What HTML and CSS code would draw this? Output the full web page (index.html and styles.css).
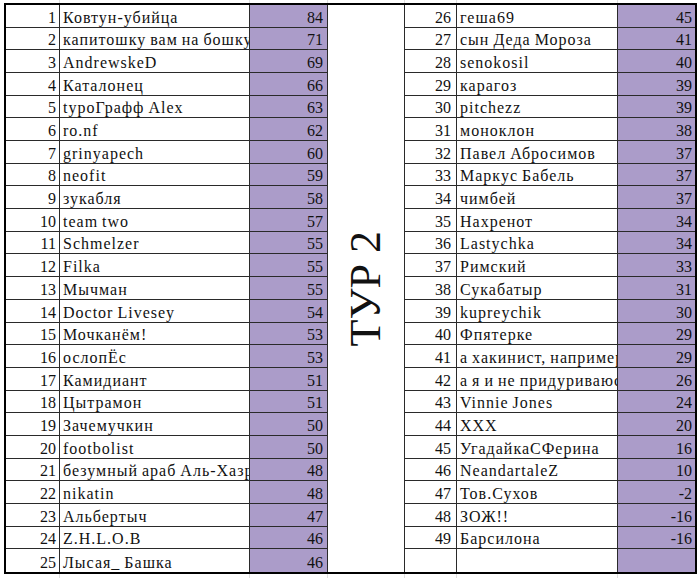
FILE: index.html
```html
<!DOCTYPE html>
<html lang="ru">
<head>
<meta charset="utf-8">
<title>ТУР 2</title>
<link rel="stylesheet" href="styles.css">
</head>
<body>
<div class="sheet">
  <div class="tour"><span class="tour-text">ТУР 2</span></div>

  <div class="c n">1</div><div class="c name">Ковтун-убийца</div><div class="c s">84</div>
  <div class="c n nr">26</div><div class="c name">геша69</div><div class="c s sr">45</div>

  <div class="c n">2</div><div class="c name">капитошку вам на бошку</div><div class="c s">71</div>
  <div class="c n nr">27</div><div class="c name">сын Деда Мороза</div><div class="c s sr">41</div>

  <div class="c n">3</div><div class="c name">AndrewskeD</div><div class="c s">69</div>
  <div class="c n nr">28</div><div class="c name">senokosil</div><div class="c s sr">40</div>

  <div class="c n">4</div><div class="c name">Каталонец</div><div class="c s">66</div>
  <div class="c n nr">29</div><div class="c name">карагоз</div><div class="c s sr">39</div>

  <div class="c n">5</div><div class="c name">typoГрафф Alex</div><div class="c s">63</div>
  <div class="c n nr">30</div><div class="c name">pitchezz</div><div class="c s sr">39</div>

  <div class="c n">6</div><div class="c name">ro.nf</div><div class="c s">62</div>
  <div class="c n nr">31</div><div class="c name">моноклон</div><div class="c s sr">38</div>

  <div class="c n">7</div><div class="c name">grinyapech</div><div class="c s">60</div>
  <div class="c n nr">32</div><div class="c name">Павел Абросимов</div><div class="c s sr">37</div>

  <div class="c n">8</div><div class="c name">neofit</div><div class="c s">59</div>
  <div class="c n nr">33</div><div class="c name">Маркус Бабель</div><div class="c s sr">37</div>

  <div class="c n">9</div><div class="c name">зукабля</div><div class="c s">58</div>
  <div class="c n nr">34</div><div class="c name">чимбей</div><div class="c s sr">37</div>

  <div class="c n">10</div><div class="c name">team two</div><div class="c s">57</div>
  <div class="c n nr">35</div><div class="c name">Нахренот</div><div class="c s sr">34</div>

  <div class="c n">11</div><div class="c name">Schmelzer</div><div class="c s">55</div>
  <div class="c n nr">36</div><div class="c name">Lastychka</div><div class="c s sr">34</div>

  <div class="c n">12</div><div class="c name">Filka</div><div class="c s">55</div>
  <div class="c n nr">37</div><div class="c name">Римский</div><div class="c s sr">33</div>

  <div class="c n">13</div><div class="c name">Мычман</div><div class="c s">55</div>
  <div class="c n nr">38</div><div class="c name">Сукабатыр</div><div class="c s sr">31</div>

  <div class="c n">14</div><div class="c name">Doctor Livesey</div><div class="c s">54</div>
  <div class="c n nr">39</div><div class="c name">kupreychik</div><div class="c s sr">30</div>

  <div class="c n">15</div><div class="c name">Мочканём!</div><div class="c s">53</div>
  <div class="c n nr">40</div><div class="c name">Фпятерке</div><div class="c s sr">29</div>

  <div class="c n">16</div><div class="c name">ослопЁс</div><div class="c s">53</div>
  <div class="c n nr">41</div><div class="c name">а хакинист, например</div><div class="c s sr">29</div>

  <div class="c n">17</div><div class="c name">Камидиант</div><div class="c s">51</div>
  <div class="c n nr">42</div><div class="c name">а я и не придуриваюсь</div><div class="c s sr">26</div>

  <div class="c n">18</div><div class="c name">Цытрамон</div><div class="c s">51</div>
  <div class="c n nr">43</div><div class="c name">Vinnie Jones</div><div class="c s sr">24</div>

  <div class="c n">19</div><div class="c name">Зачемучкин</div><div class="c s">50</div>
  <div class="c n nr">44</div><div class="c name">XXX</div><div class="c s sr">20</div>

  <div class="c n">20</div><div class="c name">footbolist</div><div class="c s">50</div>
  <div class="c n nr">45</div><div class="c name">УгадайкаСФерина</div><div class="c s sr">16</div>

  <div class="c n">21</div><div class="c name">безумный араб Аль-Хазред</div><div class="c s">48</div>
  <div class="c n nr">46</div><div class="c name">NeandartaleZ</div><div class="c s sr">10</div>

  <div class="c n">22</div><div class="c name">nikatin</div><div class="c s">48</div>
  <div class="c n nr">47</div><div class="c name">Тов.Сухов</div><div class="c s sr">-2</div>

  <div class="c n">23</div><div class="c name">Альбертыч</div><div class="c s">47</div>
  <div class="c n nr">48</div><div class="c name">ЗОЖ!!</div><div class="c s sr">-16</div>

  <div class="c n">24</div><div class="c name">Z.H.L.O.B</div><div class="c s">46</div>
  <div class="c n nr">49</div><div class="c name">Барсилона</div><div class="c s sr">-16</div>

  <div class="c n end">25</div><div class="c name end">Лысая_ Башка</div><div class="c s end">46</div>
  <div class="c n nr end"></div><div class="c name end"></div><div class="c s sr end"></div>
</div>
</body>
</html>
```

FILE: styles.css
```css
html, body {
  margin: 0;
  padding: 0;
}

body {
  font-family: "Liberation Serif", "Times New Roman", serif;
  font-size: 16px;
  color: #111;
  height: 578px;
  background-color: #ffffff;
  background-image:
    linear-gradient(#dedede, #dedede),
    linear-gradient(#dedede, #dedede),
    linear-gradient(#dedede, #dedede),
    linear-gradient(#dedede, #dedede),
    linear-gradient(#dedede, #dedede),
    linear-gradient(#dedede, #dedede);
  background-size: 1px 100%;
  background-repeat: no-repeat;
  background-position: 59px 0, 249px 0, 327px 0, 404px 0, 456px 0, 617px 0;
}

.sheet {
  display: grid;
  grid-template-columns: 54px 190px 78px 77px 52px 161px 77px;
  grid-template-rows: repeat(25, 1fr);
  width: 689px;
  height: 567px;
  border: 2px solid #000;
  margin: 0 0 0 4px;
  position: relative;
  top: 3px;
  background: #ffffff;
}

.c {
  box-sizing: border-box;
  border-right: 1px solid #2a2a2a;
  border-bottom: 1px solid #2a2a2a;
  display: flex;
  align-items: flex-end;
  line-height: 18px;
  white-space: nowrap;
  overflow: hidden;
  min-width: 0;
}

.c.end {
  border-bottom: none;
}

.n {
  justify-content: flex-end;
  padding-right: 3px;
}

.nr {
  padding-right: 5px;
}

.name {
  padding-left: 3px;
  letter-spacing: 1px;
  word-spacing: -1px;
}

.s {
  justify-content: flex-end;
  padding-right: 4px;
  background: #ab9cc9;
}

.sr {
  border-right: none;
  padding-right: 3px;
}

.tour {
  grid-column: 4;
  grid-row: 1 / -1;
  border-right: 1px solid #2a2a2a;
  display: flex;
  align-items: center;
  justify-content: center;
}

.tour-text {
  writing-mode: vertical-rl;
  transform: rotate(180deg);
  font-size: 44px;
  line-height: 1;
  white-space: nowrap;
}
```
